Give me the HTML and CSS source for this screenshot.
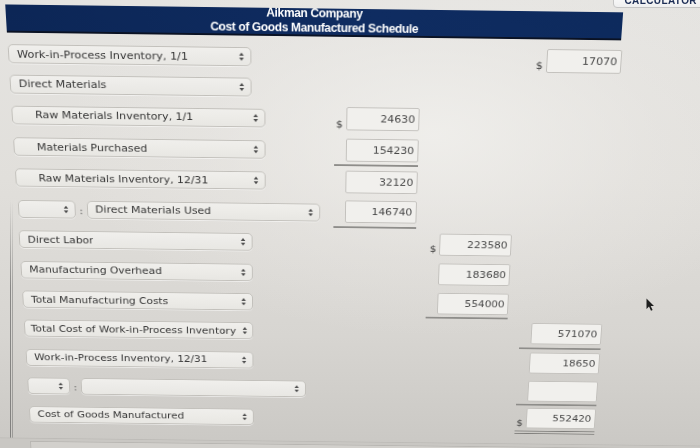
FILE: index.html
```html
<!DOCTYPE html>
<html lang="en">
<head>
<meta charset="utf-8">
<title>Aikman Company - Cost of Goods Manufactured Schedule</title>
<link rel="stylesheet" href="styles.css">
</head>
<body>
<div class="screen">
  <div class="bezel"></div>
  <div class="sheet">
    <div class="sheet-head">
      <div class="t1">Aikman Company</div>
      <div class="t2">Cost of Goods Manufactured Schedule</div>
    </div>

    <div class="rows">
      <div class="row tight">
        <div class="label"><div class="select w-std"><span>Work-in-Process Inventory, 1/1</span><svg class="arr" viewBox="0 0 6 10"><path d="M3 0.8 L5.4 4 H0.6Z M3 9.2 L5.4 6 H0.6Z"/></svg></div></div>
        <div class="amount col3"><span class="cur">$</span><input class="num" value="17070" readonly></div>
      </div>

      <div class="row tight">
        <div class="label"><div class="select w-std"><span>Direct Materials</span><svg class="arr" viewBox="0 0 6 10"><path d="M3 0.8 L5.4 4 H0.6Z M3 9.2 L5.4 6 H0.6Z"/></svg></div></div>
      </div>

      <div class="row">
        <div class="label"><div class="select w-wide indent"><span>Raw Materials Inventory, 1/1</span><svg class="arr" viewBox="0 0 6 10"><path d="M3 0.8 L5.4 4 H0.6Z M3 9.2 L5.4 6 H0.6Z"/></svg></div></div>
        <div class="amount col1"><span class="cur">$</span><input class="num" value="24630" readonly></div>
      </div>

      <div class="row">
        <div class="label"><div class="select w-wide indent"><span>Materials Purchased</span><svg class="arr" viewBox="0 0 6 10"><path d="M3 0.8 L5.4 4 H0.6Z M3 9.2 L5.4 6 H0.6Z"/></svg></div></div>
        <div class="amount col1 rule"><span class="cur"></span><input class="num" value="154230" readonly></div>
      </div>

      <div class="row">
        <div class="label"><div class="select w-wide indent"><span>Raw Materials Inventory, 12/31</span><svg class="arr" viewBox="0 0 6 10"><path d="M3 0.8 L5.4 4 H0.6Z M3 9.2 L5.4 6 H0.6Z"/></svg></div></div>
        <div class="amount col1"><span class="cur"></span><input class="num" value="32120" readonly></div>
      </div>

      <div class="row">
        <div class="label">
          <div class="select w-op"><span></span><svg class="arr" viewBox="0 0 6 10"><path d="M3 0.8 L5.4 4 H0.6Z M3 9.2 L5.4 6 H0.6Z"/></svg></div>
          <span class="colon">:</span>
          <div class="select w-line"><span>Direct Materials Used</span><svg class="arr" viewBox="0 0 6 10"><path d="M3 0.8 L5.4 4 H0.6Z M3 9.2 L5.4 6 H0.6Z"/></svg></div>
        </div>
        <div class="amount col1 rule"><span class="cur"></span><input class="num" value="146740" readonly></div>
      </div>

      <div class="row">
        <div class="label"><div class="select w-std"><span>Direct Labor</span><svg class="arr" viewBox="0 0 6 10"><path d="M3 0.8 L5.4 4 H0.6Z M3 9.2 L5.4 6 H0.6Z"/></svg></div></div>
        <div class="amount col2"><span class="cur">$</span><input class="num" value="223580" readonly></div>
      </div>

      <div class="row">
        <div class="label"><div class="select w-std"><span>Manufacturing Overhead</span><svg class="arr" viewBox="0 0 6 10"><path d="M3 0.8 L5.4 4 H0.6Z M3 9.2 L5.4 6 H0.6Z"/></svg></div></div>
        <div class="amount col2"><span class="cur"></span><input class="num" value="183680" readonly></div>
      </div>

      <div class="row">
        <div class="label"><div class="select w-std"><span>Total Manufacturing Costs</span><svg class="arr" viewBox="0 0 6 10"><path d="M3 0.8 L5.4 4 H0.6Z M3 9.2 L5.4 6 H0.6Z"/></svg></div></div>
        <div class="amount col2 rule"><span class="cur"></span><input class="num" value="554000" readonly></div>
      </div>

      <div class="row">
        <div class="label"><div class="select w-std tightpad"><span>Total Cost of Work-in-Process Inventory</span><svg class="arr" viewBox="0 0 6 10"><path d="M3 0.8 L5.4 4 H0.6Z M3 9.2 L5.4 6 H0.6Z"/></svg></div></div>
        <div class="amount col3 rule"><span class="cur"></span><input class="num" value="571070" readonly></div>
      </div>

      <div class="row">
        <div class="label"><div class="select w-std"><span>Work-in-Process Inventory, 12/31</span><svg class="arr" viewBox="0 0 6 10"><path d="M3 0.8 L5.4 4 H0.6Z M3 9.2 L5.4 6 H0.6Z"/></svg></div></div>
        <div class="amount col3"><span class="cur"></span><input class="num" value="18650" readonly></div>
      </div>

      <div class="row">
        <div class="label">
          <div class="select w-op-sm"><span></span><svg class="arr" viewBox="0 0 6 10"><path d="M3 0.8 L5.4 4 H0.6Z M3 9.2 L5.4 6 H0.6Z"/></svg></div>
          <span class="colon">:</span>
          <div class="select w-line"><span></span><svg class="arr" viewBox="0 0 6 10"><path d="M3 0.8 L5.4 4 H0.6Z M3 9.2 L5.4 6 H0.6Z"/></svg></div>
        </div>
        <div class="amount col3 rule"><span class="cur"></span><input class="num" value="" readonly></div>
      </div>

      <div class="row">
        <div class="label"><div class="select w-std"><span>Cost of Goods Manufactured</span><svg class="arr" viewBox="0 0 6 10"><path d="M3 0.8 L5.4 4 H0.6Z M3 9.2 L5.4 6 H0.6Z"/></svg></div></div>
        <div class="amount col3 double"><span class="cur">$</span><input class="num" value="552420" readonly></div>
      </div>
    </div>

    <div class="sheet-foot"><div class="foot-box"></div></div>
  </div>

  <div class="calc-btn">CALCULATOR</div>
  <svg class="cursor" width="9" height="14" viewBox="0 0 9 14"><path d="M0.5 0.5 L0.5 11 L3 8.6 L5 12.8 L6.6 12 L4.7 8 L8 8 Z"/></svg>
</div>
</body>
</html>
```

FILE: styles.css
```css
* { box-sizing: border-box; }

html, body {
  margin: 0;
  padding: 0;
}

body {
  background: #dddbd7;
}

.screen {
  position: relative;
  width: 700px;
  height: 448px;
  overflow: hidden;
  background:
    radial-gradient(ellipse 70% 60% at 62% 30%, rgba(242, 241, 238, 0.8) 0%, rgba(236, 234, 231, 0.35) 45%, rgba(236, 234, 231, 0) 75%),
    linear-gradient(180deg, #e5e4e1 0%, #e1dfdb 40%, #d7d5d1 75%, #cac8c4 100%);
  font-family: "DejaVu Sans", Verdana, sans-serif;
}

.bezel {
  position: absolute;
  left: 10px;
  top: 200px;
  width: 3px;
  height: 248px;
  border-left: 1px solid rgba(70, 70, 70, 0.55);
  border-right: 1px solid rgba(70, 70, 70, 0.35);
  -webkit-mask-image: linear-gradient(180deg, transparent 0%, #000 35%);
  mask-image: linear-gradient(180deg, transparent 0%, #000 35%);
}

/* the schedule, photographed slightly from above */
.sheet {
  width: 625px;
  margin-left: 4px;
  padding-top: 9px;
  transform-origin: 341px 0;
  transform: perspective(1000px) rotateX(-12deg) rotate(0.75deg);
}

.sheet-head {
  margin-left: 1px;
  width: 619px;
  height: 29px;
  overflow: hidden;
  background: linear-gradient(90deg, #0c2656 0%, #0f2c61 60%, #0d2a5d 100%);
  border-bottom: 2px solid #0a1224;
  color: #ffffff;
  text-align: center;
  font-family: "Liberation Sans", Arial, sans-serif;
  font-weight: 700;
  font-size: 12px;
  letter-spacing: -0.35px;
  line-height: 14.5px;
}

.sheet-head .t1 {
  margin-top: -2px;
}

.rows {
  margin-top: 6.5px;
}

.row {
  display: grid;
  grid-template-columns: 318px 87px 88px 88px;
  column-gap: 13.5px;
  height: 34.4px;
  align-items: center;
}

.row.tight {
  height: 31.5px;
}

.label {
  grid-column: 1;
  display: flex;
  align-items: center;
  padding-left: 1px;
}

.select {
  display: flex;
  align-items: center;
  justify-content: space-between;
  gap: 3px;
  height: 20px;
  padding: 0 6px 0 8px;
  border: 1px solid #c2c0bb;
  border-radius: 5px;
  background: linear-gradient(180deg, #f0efec 0%, #e8e7e3 100%);
  box-shadow: 0 1px 0 rgba(255, 255, 255, 0.5);
  color: #353535;
  font-size: 11.3px;
  white-space: nowrap;
}

.select span {
  overflow: hidden;
}

.select.indent {
  padding-left: 23px;
}

.select.tightpad {
  padding-left: 6px;
  padding-right: 5px;
}

.w-std { width: 246px; }
.w-wide { width: 260px; }
.w-op { width: 60px; margin-left: 1px; }
.w-op-sm { width: 46px; }
.w-line { width: 245px; }

.arr {
  flex: none;
  width: 6px;
  height: 10px;
  fill: #4d4d4d;
}

.colon {
  margin: 3px 4px 0 4px;
  color: #4a4a4a;
  font-size: 11px;
  line-height: 1;
}

.amount {
  height: 100%;
  display: flex;
  align-items: center;
  justify-content: flex-end;
}

.col1 { grid-column: 2; }
.col2 { grid-column: 3; }
.col3 { grid-column: 4; }

.amount.rule {
  border-bottom: 2px solid #8e8d8a;
}

.amount.double {
  border-bottom: 4px double #7d7c79;
}

.cur {
  align-self: center;
  width: 12px;
  margin-top: 12px;
  padding-right: 3px;
  text-align: right;
  color: #3a3a3a;
  font-size: 11px;
  line-height: 12px;
}

.num {
  width: 75px;
  height: 25px;
  margin: 0;
  padding: 0 3px 0 4px;
  border: 1px solid #c3c1bd;
  border-radius: 2px;
  background: #f1f0ed;
  color: #474747;
  font-family: "DejaVu Sans", Verdana, sans-serif;
  font-size: 11.2px;
  text-align: right;
  outline: none;
}

.col2 .num,
.col3 .num {
  width: 76px;
}

.sheet-foot {
  margin-top: 12.7px;
  margin-left: -40px;
  width: 780px;
  height: 40px;
  background: #c9c7c3;
  border-top: 1px solid #bdbbb7;
  padding: 3px 0 0 40px;
}

.foot-box {
  height: 30px;
  border-top: 1px solid #b8b6b2;
  border-left: 1px solid #b8b6b2;
  background: #d2d0cc;
}

.calc-btn {
  position: absolute;
  top: -9px;
  right: -8px;
  height: 17px;
  padding: 3px 10px 0;
  border: 1px solid #c5c5c5;
  border-radius: 4px;
  background: linear-gradient(180deg, #ffffff, #efefef);
  color: #1c2d55;
  font-family: "Liberation Sans", Arial, sans-serif;
  font-weight: 700;
  font-size: 10px;
  letter-spacing: 0.4px;
}

.cursor {
  position: absolute;
  left: 646px;
  top: 298px;
  fill: #1e1e1e;
}
```
